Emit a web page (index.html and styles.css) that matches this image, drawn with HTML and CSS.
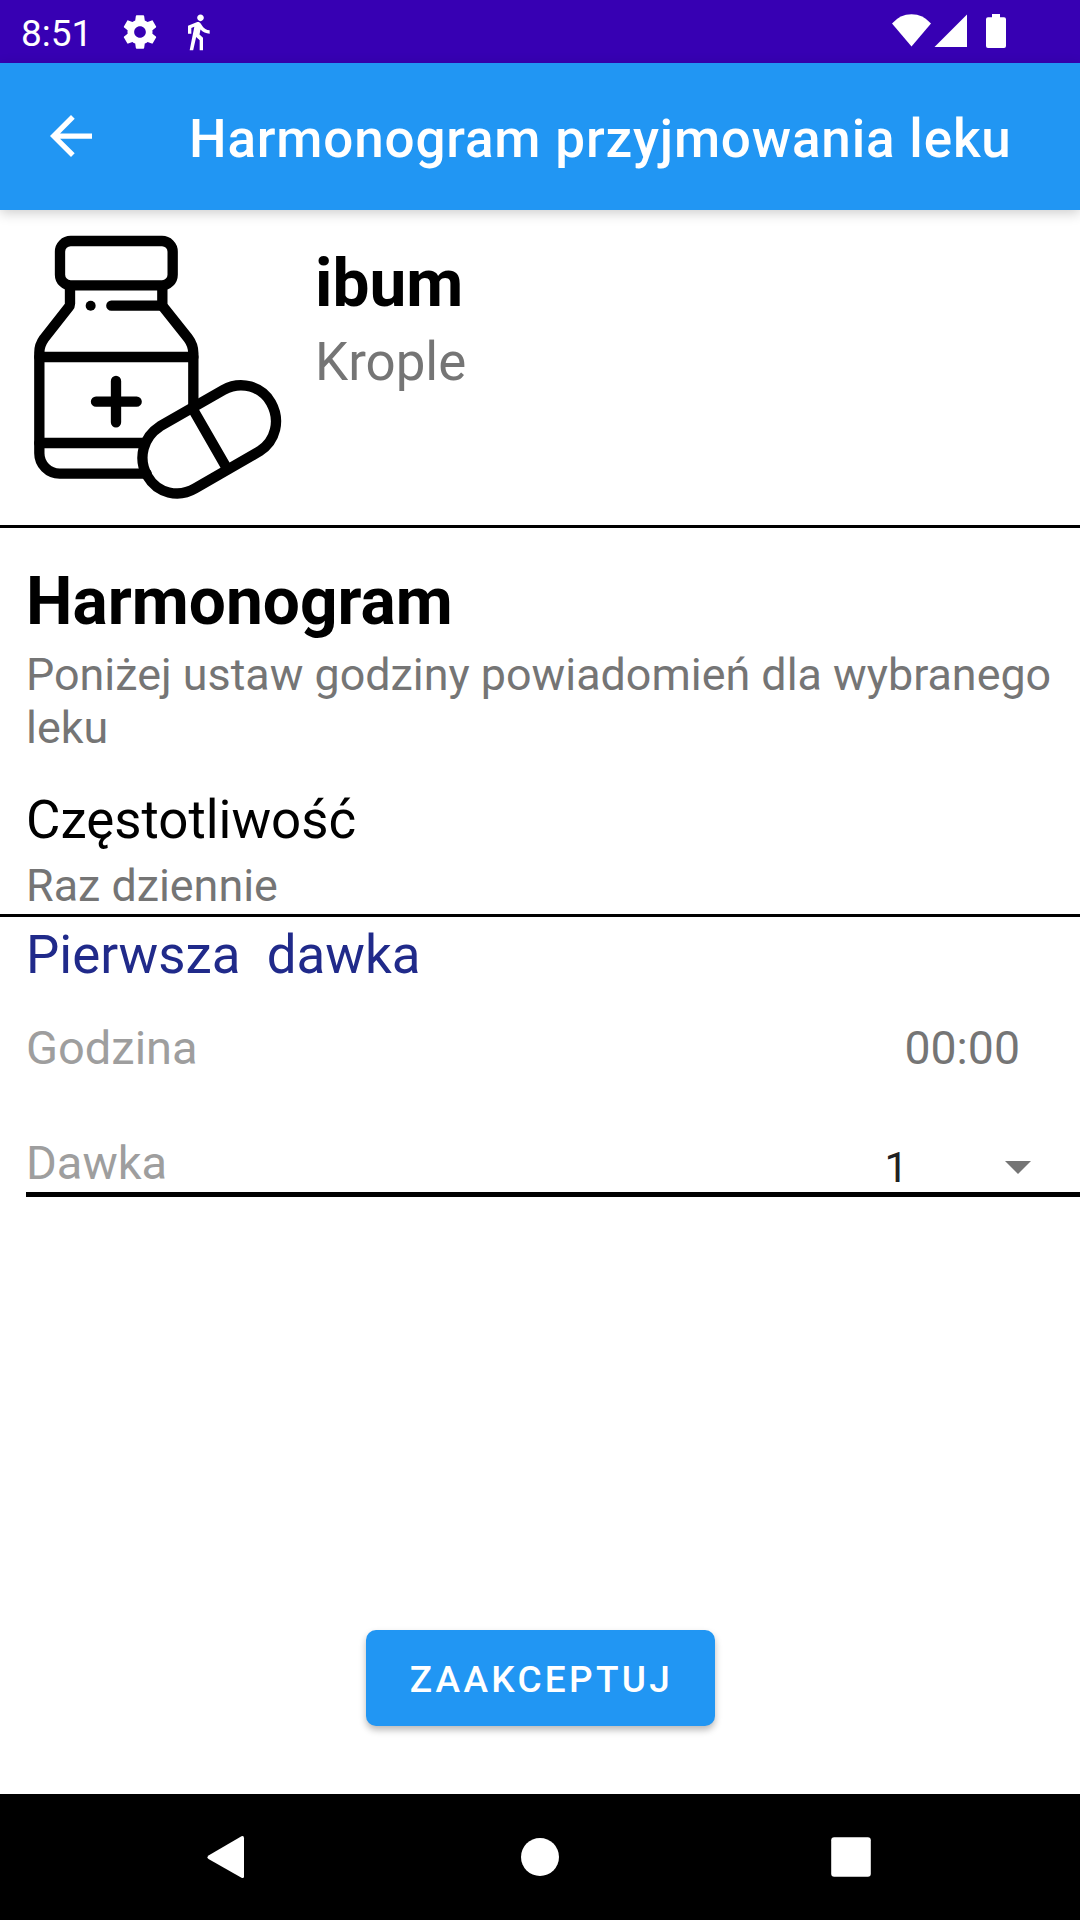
FILE: index.html
```html
<!DOCTYPE html>
<html lang="pl">
<head>
<meta charset="utf-8">
<title>Harmonogram przyjmowania leku</title>
<link rel="stylesheet" href="styles.css">
</head>
<body>
<div class="screen">
  <div class="status-bar">
    <span class="clock">8:51</span>
    <svg class="icon-gear" viewBox="0 0 24 24"><path d="M19.43 12.98c.04-.32.07-.64.07-.98s-.03-.66-.07-.98l2.11-1.65c.19-.15.24-.42.12-.64l-2-3.46c-.12-.22-.39-.3-.61-.22l-2.49 1c-.52-.4-1.080-.73-1.690-.98l-.38-2.650C14.460 2.180 14.250 2 14 2h-4c-.25 0-.46.18-.49.42l-.38 2.650c-.61.25-1.170.59-1.690.98l-2.490-1c-.23-.09-.49 0-.61.22l-2 3.460c-.13.22-.07.49.12.64l2.110 1.650c-.04.32-.07.65-.07.98s.03.66.07.98l-2.110 1.650c-.19.15-.24.42-.12.64l2 3.460c.12.22.39.3.61.22l2.490-1c.52.4 1.080.73 1.690.98l.38 2.650c.03.24.24.42.49.42h4c.25 0 .46-.18.49-.42l.38-2.650c.61-.25 1.170-.59 1.690-.98l2.490 1c.23.09.49 0 .61-.22l2-3.460c.12-.22.07-.49-.12-.64l-2.110-1.650zM12 15.500c-1.930 0-3.500-1.570-3.500-3.500s1.570-3.500 3.500-3.500 3.500 1.570 3.500 3.500-1.570 3.500-3.500 3.500z"/></svg>
    <svg class="icon-walk" viewBox="0 0 24 24"><path d="M13.500 5.500c1.100 0 2-.9 2-2s-.9-2-2-2-2 .9-2 2 .9 2 2 2zM9.800 8.900L7 23h2.100l1.800-8 2.100 2v6h2v-7.500l-2.100-2 .6-3C14.800 12 16.800 13 19 13v-2c-1.900 0-3.500-1-4.300-2.400l-1-1.600c-.4-.6-1-1-1.700-1-.3 0-.5.1-.8.1L6 8.300V13h2V9.600l1.800-.7"/></svg>
    <svg class="icon-signal" viewBox="0 0 116 36">
      <path d="M0 9.500Q8 .2 19.500 .2T39 9.500L19.500 32.500Z"/>
      <path d="M75 .5V33H42.500Z"/>
      <path d="M100 0h8v3.300h4q2 0 2 2V32q0 2-2 2H96q-2 0-2-2V5.300q0-2 2-2h4Z"/>
    </svg>
  </div>

  <header class="app-bar">
    <svg class="icon-back" viewBox="4 4 16 16"><path d="M20 11H7.830l5.590-5.590L12 4l-8 8 8 8 1.410-1.410L7.830 13H20v-2z"/></svg>
    <h1 class="app-title">Harmonogram przyjmowania leku</h1>
  </header>

  <main class="content">
    <section class="medicine">
      <svg class="medicine-icon" viewBox="0 0 900 945">
        <g fill="none" stroke="#000" stroke-width="31" stroke-linecap="round" stroke-linejoin="round">
          <rect x="180" y="93" width="338" height="133" rx="32"/>
          <path d="M210 230V281Q210 287 205 293L132 386Q118 405 118 428V730A61 61 0 0 0 179 791H440"/>
          <path d="M487 230V287L564 384Q580 405 580 430V585"/>
          <path d="M334 287H487M118 441H580M118 699H432M288 575H410M348 513V637"/>
          <path d="M480 649L670 540C724 510 786 530 813 578C842 630 828 693 778 724L586 835C535 865 472 850 442 798C412 744 430 681 480 649Z"/>
          <path d="M580 600L679 772"/>
        </g>
        <circle cx="272" cy="287" r="15"/>
      </svg>
      <div class="medicine-text">
        <h2 class="heading">ibum</h2>
        <p class="medicine-form">Krople</p>
      </div>
    </section>

    <section class="schedule">
      <h2 class="heading">Harmonogram</h2>
      <p class="hint">Poniżej ustaw godziny powiadomień dla wybranego leku</p>
      <h3 class="frequency-label">Częstotliwość</h3>
      <p class="frequency-value">Raz dziennie</p>
    </section>

    <section class="dose">
      <h3 class="dose-title">Pierwsza&nbsp; dawka</h3>
      <div class="row">
        <span>Godzina</span>
        <span class="time">00:00</span>
      </div>
      <div class="row row-amount">
        <span>Dawka</span>
        <span class="spinner">1<svg class="caret" viewBox="0 0 26 13"><path d="M0 0H26L13 13Z"/></svg></span>
      </div>
    </section>

    <button class="accept" type="button">ZAAKCEPTUJ</button>
  </main>

  <nav class="nav-bar">
    <svg viewBox="0 0 44 44"><path d="M37 3.200V41.200Q37 44 34.500 42.700L1.500 24Q-.5 22.200 1.500 20.400L34.500 1.200Q37 .2 37 3.200Z"/></svg>
    <svg viewBox="0 0 44 44"><circle cx="22" cy="22" r="19"/></svg>
    <svg viewBox="0 0 44 44"><rect x="2.200" y="2.200" width="39.600" height="39.600" rx="3"/></svg>
  </nav>
</div>
</body>
</html>
```
FILE: styles.css
```css
* { box-sizing: border-box; }

body {
  margin: 0;
  font-family: Roboto, "Liberation Sans", sans-serif;
  background: #fff;
}

h1, h2, h3, p { margin: 0; font-weight: 400; }

svg { display: block; flex: none; }

.screen {
  width: 1080px;
  height: 1920px;
  display: flex;
  flex-direction: column;
  overflow: hidden;
}

.status-bar {
  height: 63px;
  flex: none;
  display: flex;
  align-items: flex-start;
  padding-left: 21px;
  background: #3700b3;
  color: #fff;
  fill: #fff;
}

.clock {
  width: 99px;
  padding-top: 12px;
  font-size: 37px;
  line-height: 43px;
}

.icon-gear { width: 40px; height: 40px; margin-top: 12px; }
.icon-walk { width: 40px; height: 40px; margin: 12px 0 0 18px; }
.icon-signal { width: 116px; height: 36px; margin: 14px 72px 0 auto; }

.app-bar {
  height: 147px;
  flex: none;
  display: flex;
  align-items: center;
  padding-left: 50px;
  background: #2196f3;
  color: #fff;
  fill: #fff;
  box-shadow: 0 3px 12px rgba(0, 0, 0, .2);
  z-index: 1;
}

.icon-back { width: 42px; height: 42px; margin-bottom: 2px; }

.app-title {
  margin-left: 97px;
  padding-top: 5px;
  font-size: 53px;
  line-height: 62px;
  font-weight: 500;
  letter-spacing: .0155em;
  white-space: nowrap;
}

.content {
  flex: 1;
  display: flex;
  flex-direction: column;
}

.medicine {
  display: flex;
  height: 318px;
  border-bottom: 3px solid #000;
}

.medicine-icon { width: 300px; height: 315px; }

.medicine-text { padding: 35px 0 0 15px; }

.heading {
  font-size: 65.8px;
  line-height: 77px;
  font-weight: 700;
  color: #000;
}

.medicine-form {
  margin-top: 9px;
  font-size: 52.85px;
  line-height: 62px;
  color: #757575;
}

.schedule {
  height: 389px;
  padding: 35px 0 0 26px;
  border-bottom: 3px solid #000;
}

.hint, .frequency-value {
  margin-top: 8px;
  font-size: 44.85px;
  line-height: 53px;
  color: #757575;
}

.frequency-label, .dose-title {
  font-size: 52.85px;
  line-height: 62px;
}

.frequency-label { margin-top: 35px; color: #000; }

.dose { padding: 7px 0 0 26px; }

.dose-title { color: #202a8a; }

.row {
  display: flex;
  justify-content: space-between;
  height: 55px;
  margin-top: 34px;
  padding-right: 60px;
  font-size: 47px;
  line-height: 55px;
  color: #9e9e9e;
}

.time { font-size: 46.4px; line-height: 57px; color: #757575; }

.row-amount {
  height: 122px;
  margin-top: 0;
  padding: 60px 49px 0 0;
  border-bottom: 5px solid #000;
}

.spinner {
  display: flex;
  align-items: center;
  gap: 97px;
  padding-top: 9px;
  height: 55px;
  font-size: 42px;
  color: #212121;
}

.caret { width: 26px; height: 13px; fill: #757575; }

.accept {
  width: 349px;
  height: 96px;
  margin: auto 0 68px 366px;
  padding: 2px 0 0 2px;
  border: 0;
  border-radius: 10px;
  background: #2196f3;
  color: #fff;
  font-family: inherit;
  font-size: 37px;
  font-weight: 500;
  letter-spacing: .0893em;
  box-shadow: 0 4px 7px rgba(0, 0, 0, .28);
}

.nav-bar {
  height: 126px;
  flex: none;
  display: flex;
  justify-content: center;
  align-items: center;
  gap: 267px;
  background: #000;
  fill: #fff;
}

.nav-bar svg { width: 44px; height: 44px; }
```
